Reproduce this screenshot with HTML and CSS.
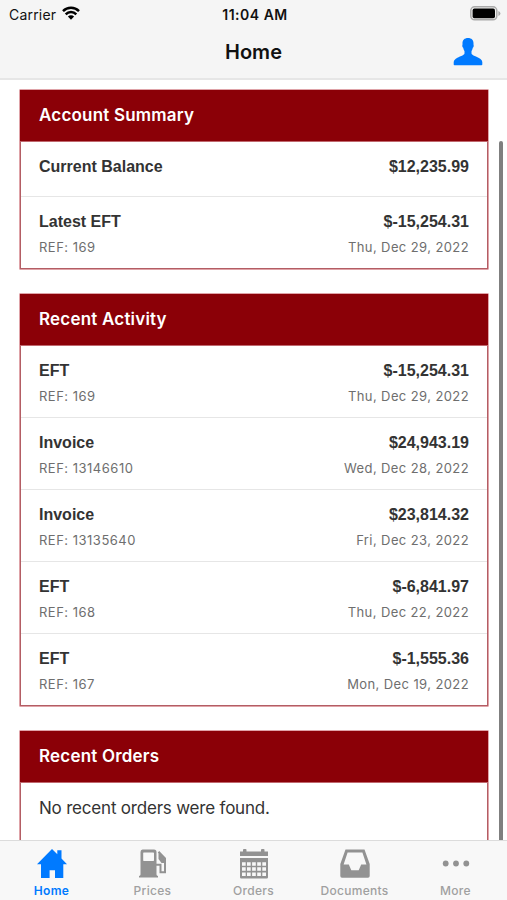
FILE: index.html
```html
<!DOCTYPE html>
<html lang="en">
<head>
<meta charset="UTF-8">
<meta name="viewport" content="width=device-width, initial-scale=1.0">
<title>Home</title>
<link rel="stylesheet" href="styles.css">
</head>
<body>

<header class="top">
    <div class="status">
        <div class="carrier">
            <span>Carrier</span>
            <svg class="wifi" width="18" height="14" viewBox="0 0 18 14">
                <path d="M1 5.1a11.4 11.4 0 0 1 16 0M3.7 8.300a7.5 7.5 0 0 1 10.6 0" fill="none" stroke="#000" stroke-width="2.5"/>
                <path d="M9 13.7 5.9 10.5a4.4 4.4 0 0 1 6.2 0z"/>
            </svg>
        </div>
        <div class="time">11:04 AM</div>
        <svg class="battery" width="31" height="15" viewBox="0 0 31 15">
            <rect x=".8" y=".8" width="26" height="13" rx="3.8" fill="#f2f2f0" stroke="#aaa" stroke-width="1.5"/>
            <rect x="2.6" y="2.6" width="22.4" height="9.6" rx="1.8"/>
            <path d="M28.4 5v5q2-.8 2-2.5t-2-2.5z" fill="#aaa"/>
        </svg>
    </div>
    <div class="nav">
        <h1>Home</h1>
        <svg class="user" width="30" height="28" viewBox="0 0 30 28">
            <path d="M15 0C18.500 0 20.700 2.100 20.500 5.500V6.500C21 8 20.600 9 19.800 9.800C19.500 11.500 19 12.300 18.500 13V15.500C19 17.500 23.500 18.300 27.500 21Q29.300 22.300 29.300 24V26.500Q29.300 27.300 28.500 27.300H1.500Q.7 27.300.7 26.500V24Q.7 22.300 2.500 21C6.500 18.300 11 17.500 11.500 15.500V13C11 12.300 10.500 11.500 10.200 9.800C9.400 9 9 8 9.500 6.500V5.500C9.300 2.100 11.500 0 15 0z"/>
        </svg>
    </div>
</header>

<main class="content">
    <section class="card">
        <h2>Account Summary</h2>
        <div class="row balance">
            <div class="line"><b>Current Balance</b><b>$12,235.99</b></div>
        </div>
        <div class="row">
            <div class="line"><b>Latest EFT</b><b>$-15,254.31</b></div>
            <div class="line sub"><span>REF: 169</span><span>Thu, Dec 29, 2022</span></div>
        </div>
    </section>

    <section class="card">
        <h2>Recent Activity</h2>
        <div class="row">
            <div class="line"><b>EFT</b><b>$-15,254.31</b></div>
            <div class="line sub"><span>REF: 169</span><span>Thu, Dec 29, 2022</span></div>
        </div>
        <div class="row">
            <div class="line"><b>Invoice</b><b>$24,943.19</b></div>
            <div class="line sub"><span>REF: 13146610</span><span>Wed, Dec 28, 2022</span></div>
        </div>
        <div class="row">
            <div class="line"><b>Invoice</b><b>$23,814.32</b></div>
            <div class="line sub"><span>REF: 13135640</span><span>Fri, Dec 23, 2022</span></div>
        </div>
        <div class="row">
            <div class="line"><b>EFT</b><b>$-6,841.97</b></div>
            <div class="line sub"><span>REF: 168</span><span>Thu, Dec 22, 2022</span></div>
        </div>
        <div class="row">
            <div class="line"><b>EFT</b><b>$-1,555.36</b></div>
            <div class="line sub"><span>REF: 167</span><span>Mon, Dec 19, 2022</span></div>
        </div>
    </section>

    <section class="card">
        <h2>Recent Orders</h2>
        <p class="empty">No recent orders were found.</p>
    </section>

    <div class="scrollbar"></div>
</main>

<nav class="tabs">
    <a class="tab active">
        <svg width="32" height="30" viewBox="0 0 32 30">
            <path d="M16 0 21.300 5.300V1.200H25.500V9.500L31 15.200H27.300V29H19V21.200H13.600V29H5V15.200H1z"/>
        </svg>
        <span>Home</span>
    </a>
    <a class="tab">
        <svg width="32" height="30" viewBox="0 0 32 30">
            <path fill-rule="evenodd" d="M5.500 .5H17Q19.500.5 19.500 3V25.500Q19.500 26.500 21 27V28.500H2V27Q3.500 26.500 3.500 25.500V3Q3.500.5 5.500.5zM6.700 3.600Q6.200 3.600 6.200 4.200V11.300Q6.200 12 6.800 12H16.300Q17 12 17 11.300V4.200Q17 3.600 16.300 3.600z"/>
            <path d="M21.500 2.700 28 9.500V23.300H23.500V15.700H19" fill="none" stroke="#929292" stroke-width="2"/>
            <path d="M21.500 4V10L24.500 14H28V9.500z"/>
        </svg>
        <span>Prices</span>
    </a>
    <a class="tab">
        <svg width="32" height="30" viewBox="0 0 32 30">
            <path d="M2 2.500H5V.8Q5 0 6 0H7.500Q8.500 0 8.500.8V2.500H23V.8Q23 0 24 0H25.500Q26.500 0 26.500.8V2.500H30V7H2z"/>
            <path fill-rule="evenodd" d="M2 9H30V28.200Q30 29.500 28.700 29.500H3.300Q2 29.500 2 28.200zM4 13.200V16.700H7.700V13.200zM9 13.200V16.700H12.700V13.200zM14.100 13.200V16.700H17.800V13.200zM19.200 13.200V16.700H22.900V13.200zM24.300 13.200V16.700H28V13.200zM4 18.300V21.800H7.700V18.300zM9 18.300V21.800H12.700V18.300zM14.100 18.300V21.800H17.800V18.300zM19.200 18.300V21.800H22.900V18.300zM24.300 18.300V21.800H28V18.300zM4 23.400V26.900H7.700V23.400zM9 23.400V26.900H12.700V23.400zM14.100 23.400V26.900H17.800V23.400zM19.200 23.400V26.900H22.900V23.400zM24.300 23.400V26.900H28V23.400z"/>
        </svg>
        <span>Orders</span>
    </a>
    <a class="tab">
        <svg width="32" height="30" viewBox="0 0 32 30">
            <path fill-rule="evenodd" d="M6.500.5H25.500L30.700 15V27Q30.700 28.700 29 28.700H3Q1.300 28.700 1.300 27V15zM8.600 3.500 4.600 15.400H9.800L12.300 21.200H19.700L22.200 15.400H27.400L23.400 3.500z"/>
        </svg>
        <span>Documents</span>
    </a>
    <a class="tab">
        <svg width="32" height="30" viewBox="0 0 32 30">
            <circle cx="5.700" cy="14.500" r="2.900"/>
            <circle cx="16" cy="14.500" r="2.900"/>
            <circle cx="26.300" cy="14.500" r="2.900"/>
        </svg>
        <span>More</span>
    </a>
</nav>

</body>
</html>
```

FILE: styles.css
```css
* {
    box-sizing: border-box;
}

body {
    font-family: Inter, sans-serif;
    background-color: #fff;
    color: #333;
    display: flex;
    flex-direction: column;
    height: 100vh;
    margin: 0;
    overflow: hidden;
}

.top {
    flex: none;
    height: 80px;
    background-color: #f5f5f5;
    border-bottom: 2px solid #e6e6e6;
    color: #111;
}

.status {
    display: grid;
    grid-template-columns: 1fr auto 1fr;
    align-items: center;
    height: 28px;
    padding: 0 6px 0 9px;
    font-size: 14px;
}

.carrier {
    display: flex;
    align-items: center;
    gap: 6px;
    letter-spacing: 0.2px;
}

.wifi {
    margin-top: -3px;
}

.time {
    font-weight: 600;
    letter-spacing: 0.5px;
}

.battery {
    justify-self: end;
    margin-top: -2px;
}

.nav {
    display: grid;
    grid-template-columns: 1fr auto 1fr;
    align-items: center;
    height: 48px;
    padding-right: 24px;
    padding-left: 24px;
}

.nav h1 {
    grid-column: 2;
    margin: 0;
    font-size: 20px;
    font-weight: 600;
}

.user {
    justify-self: end;
    fill: #007aff;
}

.content {
    position: relative;
    flex: 1;
    min-height: 0;
    overflow: hidden;
    padding: 9px 18px 0 19px;
}

.card {
    margin-bottom: 23.5px;
    padding: 0 1px 1px;
    border: 1px solid #dfa3a8;
    border-radius: 1px;
    box-shadow: inset 0 0 0 1px #b35d64;
}

.card h2 {
    height: 51.5px;
    margin: 0 -1px;
    padding: 0 19px;
    background-color: #8b0007;
    border-bottom: 1px solid #c0686e;
    color: #fff;
    font-size: 17px;
    font-weight: 600;
    line-height: 50px;
    letter-spacing: 0.2px;
}

.row {
    height: 72px;
    padding: 14px 18px 0;
    border-bottom: 1px solid #e6e6e6;
}

.row:last-child {
    height: 71px;
    border-bottom: none;
}

.row.balance {
    height: 55px;
}

.line {
    display: flex;
    justify-content: space-between;
    height: 24px;
    font-family: "Liberation Sans", Arial, sans-serif;
    font-size: 16px;
    line-height: 22px;
}

.sub {
    color: #6e6e6e;
    font-family: Inter, sans-serif;
    font-size: 13px;
    line-height: 25px;
    letter-spacing: 0.5px;
}

.sub span:last-child {
    letter-spacing: 0.4px;
}

.empty {
    height: 80px;
    margin: 0;
    padding: 0 18px;
    font-size: 17px;
    line-height: 50px;
    letter-spacing: -0.2px;
}

.scrollbar {
    position: absolute;
    top: 61px;
    right: 4px;
    bottom: 0;
    width: 4px;
    border-radius: 2px 2px 0 0;
    background-color: #7f7f7f;
}

.tabs {
    display: grid;
    grid-template-columns: repeat(5, 1fr);
    flex: none;
    height: 60px;
    padding: 0 1px;
    background-color: #f8f8f8;
    border-top: 1px solid #dcdcdc;
}

.tab {
    display: flex;
    flex-direction: column;
    align-items: center;
    padding-top: 8px;
    color: #a0a0a0;
    fill: #929292;
    font-size: 12px;
    font-weight: 500;
    line-height: 24px;
    letter-spacing: 0.3px;
}

.active {
    color: #007aff;
    fill: #007aff;
    font-weight: 600;
}
```
